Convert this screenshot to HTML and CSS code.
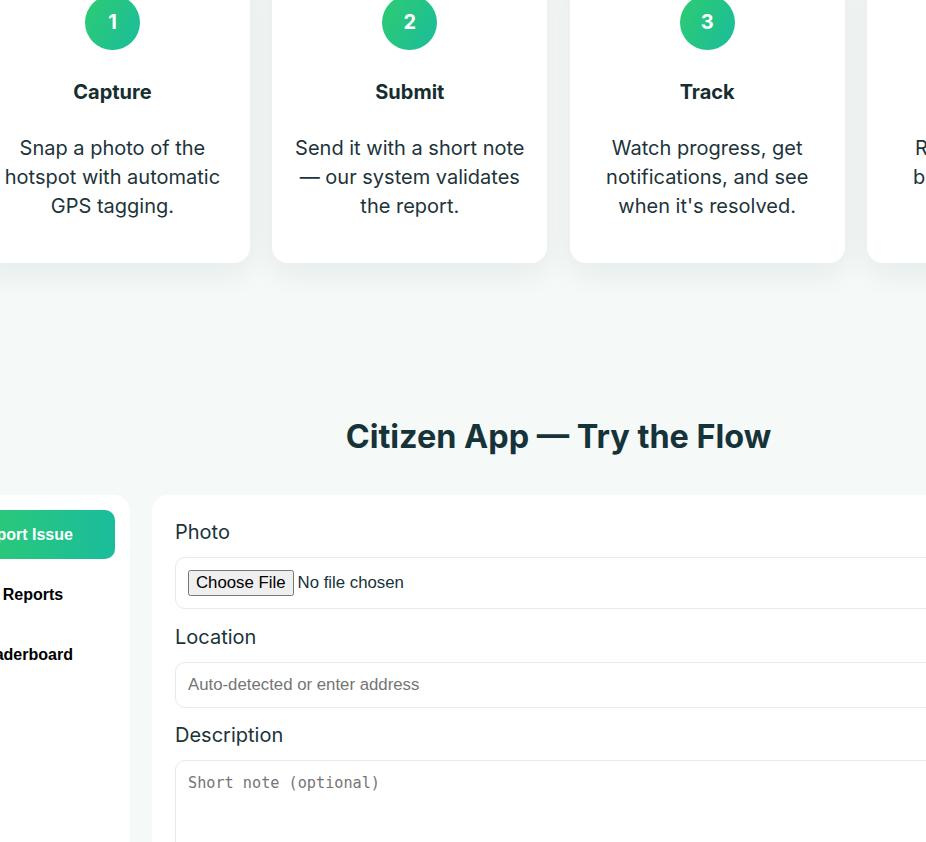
FILE: index.html
```html
<!DOCTYPE html>
<html lang="en">
<head>
<meta charset="utf-8">
<title>Citizen App</title>
<link rel="stylesheet" href="styles.css">
</head>
<body>
<div class="page">
  <section class="steps">
    <div class="step-card">
      <div class="step-num">1</div>
      <h3 class="step-title">Capture</h3>
      <p class="step-text">Snap a photo of the hotspot with automatic GPS tagging.</p>
    </div>
    <div class="step-card">
      <div class="step-num">2</div>
      <h3 class="step-title">Submit</h3>
      <p class="step-text">Send it with a short note — our system validates the report.</p>
    </div>
    <div class="step-card">
      <div class="step-num">3</div>
      <h3 class="step-title">Track</h3>
      <p class="step-text">Watch progress, get notifications, and see when it's resolved.</p>
    </div>
    <div class="step-card">
      <div class="step-num">4</div>
      <h3 class="step-title">Reward</h3>
      <p class="step-text">Receive points and badges for keeping streets safe.</p>
    </div>
  </section>

  <section class="app-section">
    <h2 class="section-title">Citizen App — Try the Flow</h2>
    <div class="app">
      <nav class="sidebar">
        <button class="nav-item active" type="button">Report Issue</button>
        <button class="nav-item" type="button">My Reports</button>
        <button class="nav-item" type="button">Leaderboard</button>
      </nav>
      <form class="panel">
        <label class="field-label" for="photo">Photo</label>
        <div class="file-box"><input id="photo" class="file-input" type="file"></div>
        <label class="field-label" for="loc">Location</label>
        <input id="loc" class="text-input" type="text" placeholder="Auto-detected or enter address">
        <label class="field-label" for="desc">Description</label>
        <textarea id="desc" class="text-area" rows="4" placeholder="Short note (optional)"></textarea>
      </form>
    </div>
  </section>
</div>
</body>
</html>
```

FILE: styles.css
```css
html, body {
  margin: 0;
  padding: 0;
  overflow: hidden;
}

body {
  background: #f5f9f8;
  font-family: Inter, "Noto Sans", sans-serif;
  color: #17323a;
}

.page {
  width: 1167px;
  margin-left: -25px;
}

.steps {
  display: grid;
  grid-template-columns: repeat(4, 1fr);
  gap: 22.5px;
  margin-top: -37px;
}

.step-card {
  background: #ffffff;
  border-radius: 16px;
  padding: 32px 20px 42px;
  text-align: center;
  box-shadow: 0 10px 30px rgba(20, 50, 50, 0.07);
}

.step-num {
  width: 55px;
  height: 55px;
  margin: 0 auto;
  border-radius: 50%;
  background: linear-gradient(120deg, #2ecc71, #1abc9c);
  color: #ffffff;
  font-weight: 700;
  font-size: 20px;
  line-height: 55px;
}

.step-title {
  margin: 30px 0 0;
  font-size: 20px;
  line-height: 24px;
  font-weight: 700;
  color: #172e31;
}

.step-text {
  margin: 30px 0 0;
  font-size: 20px;
  line-height: 29px;
  color: #1d343a;
}

.app-section {
  padding-top: 153px;
}

.section-title {
  margin: 0 0 37px;
  text-align: center;
  font-size: 32.4px;
  line-height: 42px;
  font-weight: 700;
  color: #17333a;
}

.app {
  display: grid;
  grid-template-columns: 185px 1fr;
  gap: 22px;
  margin: 0 -5px 0 -30px;
}

.sidebar {
  background: #ffffff;
  border-radius: 16px;
  padding: 15px;
  display: flex;
  flex-direction: column;
  gap: 11px;
  min-height: 420px;
}

.nav-item {
  display: block;
  width: 100%;
  text-align: left;
  border: 0;
  background: transparent;
  border-radius: 10px;
  padding: 15px 16px;
  font-family: "Liberation Sans", Arial, sans-serif;
  font-size: 16px;
  line-height: 19px;
  font-weight: 700;
  color: #000000;
}

.nav-item.active {
  background: linear-gradient(90deg, #2ecc71, #1abc9c);
  color: #ffffff;
}

.panel {
  background: #ffffff;
  border-radius: 16px;
  padding: 25px 23px;
  min-height: 420px;
}

.field-label {
  display: block;
  font-size: 20px;
  line-height: 24px;
  margin: 0 0 13px;
  color: #1a3439;
}

.file-box,
.text-input,
.text-area {
  display: block;
  width: 100%;
  box-sizing: border-box;
  border: 1px solid #e6eaea;
  border-radius: 10px;
  background: #ffffff;
}

.file-box {
  height: 52px;
  padding: 0 12px;
  display: flex;
  align-items: center;
  margin-bottom: 16px;
}

.file-input {
  font-family: "Liberation Sans", Arial, sans-serif;
  font-size: 16.8px;
}

.text-input {
  height: 46px;
  padding: 0 12px;
  font-family: "Liberation Sans", Arial, sans-serif;
  font-size: 16.8px;
  margin-bottom: 15px;
}

.text-area {
  padding: 13px 12px;
  font-family: monospace;
  font-size: 15.2px;
  height: 120px;
  resize: none;
}
```
